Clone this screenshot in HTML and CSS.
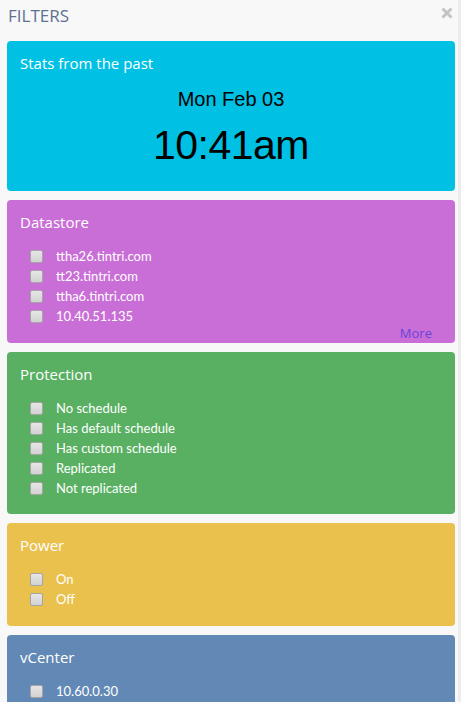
FILE: index.html
```html
<!DOCTYPE html>
<html>
<head>
<meta charset="utf-8">
<link rel="stylesheet" href="styles.css">
</head>
<body>
<div class="panel">
  <div class="header">
    <span class="title">FILTERS</span>
    <svg class="close" width="12" height="12" viewBox="0 0 12 12"><path d="M1.5 1.5 L10.5 10.5 M10.5 1.5 L1.5 10.5" stroke="#c4c4c4" stroke-width="3" stroke-linecap="butt"/></svg>
  </div>
  <div class="cards">
    <section class="card cyan">
      <h2>Stats from the past</h2>
      <div class="date">Mon Feb 03</div>
      <div class="time">10:41am</div>
    </section>
    <section class="card purple">
      <h2>Datastore</h2>
      <ul class="list">
        <li><span class="cb"></span>ttha26.tintri.com</li>
        <li><span class="cb"></span>tt23.tintri.com</li>
        <li><span class="cb"></span>ttha6.tintri.com</li>
        <li><span class="cb"></span>10.40.51.135</li>
      </ul>
      <div class="more">More</div>
    </section>
    <section class="card green">
      <h2>Protection</h2>
      <ul class="list">
        <li><span class="cb"></span>No schedule</li>
        <li><span class="cb"></span>Has default schedule</li>
        <li><span class="cb"></span>Has custom schedule</li>
        <li><span class="cb"></span>Replicated</li>
        <li><span class="cb"></span>Not replicated</li>
      </ul>
    </section>
    <section class="card yellow">
      <h2>Power</h2>
      <ul class="list">
        <li><span class="cb"></span>On</li>
        <li><span class="cb"></span>Off</li>
      </ul>
    </section>
    <section class="card blue">
      <h2>vCenter</h2>
      <ul class="list">
        <li><span class="cb"></span>10.60.0.30</li>
      </ul>
    </section>
  </div>
</div>
</body>
</html>
```

FILE: styles.css
```css
html, body {
  margin: 0;
  padding: 0;
  height: 100%;
  overflow: hidden;
}
body {
  background: #f8f8f8;
  font-family: "Open Sans", "Noto Sans", sans-serif;
}
.panel {
  width: 458px;
  border-right: 3px solid #ececec;
  min-height: 100%;
  box-sizing: content-box;
}
.header {
  display: flex;
  justify-content: space-between;
  align-items: flex-start;
  height: 41px;
  padding: 0 5px 0 8px;
  box-sizing: border-box;
}
.title {
  margin-top: 5px;
  font-size: 17px;
  line-height: 22px;
  color: #5d7191;
}
.close {
  margin-top: 7px;
  display: block;
}
.cards {
  display: flex;
  flex-direction: column;
  gap: 9px;
  padding-left: 7px;
}
.card {
  width: 448px;
  box-sizing: border-box;
  border-radius: 4px;
  padding: 12px 13px 17px 13px;
  color: #fff;
}
.card h2 {
  margin: 0;
  font-size: 15px;
  font-weight: 400;
  line-height: 20px;
}
.cyan { background: #00c1e4; height: 150px; }
.purple { background: #c96ed6; }
.green { background: #59b062; padding-bottom: 16px; }
.yellow { background: #e9c14c; }
.blue { background: #6289b5; }
.date {
  font-family: "Liberation Sans", Arial, sans-serif;
  color: #000;
  font-size: 20px;
  line-height: 24px;
  text-align: center;
  margin-top: 14px;
}
.time {
  font-family: "Liberation Sans", Arial, sans-serif;
  color: #000;
  font-size: 41px;
  line-height: 46px;
  text-align: center;
  margin-top: 11px;
  letter-spacing: -0.5px;
}
.list {
  list-style: none;
  margin: 14px 0 0 0;
  padding: 0 0 0 10px;
}
.list li {
  display: flex;
  align-items: center;
  height: 20px;
  font-family: "Lato", "Open Sans", sans-serif;
  font-size: 13px;
  line-height: 20px;
}
.cb {
  width: 11px;
  height: 11px;
  border: 1px solid #a5a5a5;
  border-radius: 2px;
  background: linear-gradient(#e6e6e6, #d2d2d2);
  margin-right: 13px;
  flex: none;
}
.more {
  text-align: right;
  font-size: 13px;
  line-height: 20px;
  color: #6b42d8;
  margin: -3px 10px -17px 0;
}
```
